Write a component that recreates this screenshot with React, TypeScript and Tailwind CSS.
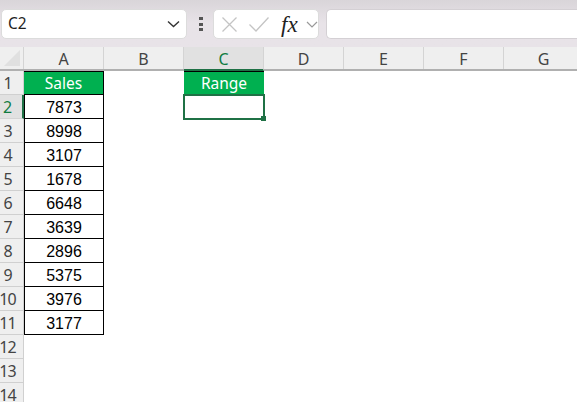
const cols = ["A", "B", "C", "D", "E", "F", "G"];
const data = [7873, 8998, 3107, 1678, 6648, 3639, 2896, 5375, 3976, 3177];
const rows = Array.from({ length: 14 }, (_, i) => i + 1);
const ui = "font-['Noto_Sans','Open_Sans',sans-serif]";

function Cell({ r, c }: { r: number; c: number }) {
  if (c === 0 && r === 1)
    return <div className={`h-6 w-20 shrink-0 bg-[#00b050] border-y border-black border-r flex items-center justify-center pt-px text-white text-[15.5px] ${ui}`}>Sales</div>;
  if (c === 0 && r <= 11)
    return <div className="h-6 w-20 shrink-0 bg-white border-b border-l border-r border-black flex items-center justify-center pt-[2px] text-black text-[16px] font-['Liberation_Sans',sans-serif]">{data[r - 2]}</div>;
  if (c === 2 && r === 1)
    return <div className={`h-6 w-20 shrink-0 bg-[#00b050] border-y border-black flex items-center justify-center pt-[2px] text-white text-[15.5px] ${ui}`}>Range</div>;
  return <div className="h-6 w-20 shrink-0 bg-white" />;
}

export default function App() {
  return (
    <div className="relative w-[577px] h-[402px] overflow-hidden bg-white">
      <div className="h-[47px] flex items-start bg-gradient-to-b from-[#d9d5d9] via-[#e8e3e8] to-[#e8e3e8] pt-[9px] pl-px">
        <div className={`w-[186px] h-[30px] shrink-0 bg-white rounded-[5px] border border-[#dcdcdc] flex items-center justify-between pl-[6px] pr-[6px] text-[15.5px] text-[#1f1f1f] ${ui}`}>
          <span>C2</span>
          <svg width="13" height="8" viewBox="0 0 13 8" fill="none" stroke="#333" strokeWidth="1.4"><path d="M1 1.5 6.5 6.5l5.5-5" /></svg>
        </div>
        <div className="w-[4px] h-[14px] ml-[12px] mt-[8px] shrink-0 flex flex-col justify-between">
          <div className="w-[4px] h-[3px] bg-[#555]" />
          <div className="w-[4px] h-[3px] bg-[#555]" />
          <div className="w-[4px] h-[3px] bg-[#555]" />
        </div>
        <div className="w-[106px] h-[30px] ml-[10px] bg-white rounded-[5px] border border-[#dcdcdc] flex items-center pl-[8px] shrink-0">
          <svg width="15" height="15" viewBox="0 0 15 15" fill="none" stroke="#c4c4c4" strokeWidth="1.3"><path d="M.5.5l14 14M14.5.5l-14 14" /></svg>
          <svg className="ml-[12px]" width="20" height="15" viewBox="0 0 20 15" fill="none" stroke="#c4c4c4" strokeWidth="1.3"><path d="M.5 7.5l6.5 6.5L19.5.5" /></svg>
          <span className="ml-[12px] w-[18px] text-[23px] leading-none italic text-[#222] font-['Liberation_Serif',serif]">fx</span>
          <svg className="ml-[7px]" width="12" height="7" viewBox="0 0 12 7" fill="none" stroke="#999" strokeWidth="1.2"><path d="M1 1l5 5 5-5" /></svg>
        </div>
        <div className="flex-1 h-[30px] ml-[7px] bg-white border border-[#d4d0d4] border-r-0 rounded-l-[5px]" />
      </div>

      <div className={`flex h-6 bg-[#efefef] border-b-2 border-[#b0b0b0] text-[16px] text-[#444] ${ui}`}>
        <div className="w-6 shrink-0 relative border-r border-[#d4d4d4]">
          <svg className="absolute left-[4px] top-[3px]" width="16" height="16" viewBox="0 0 16 16"><path d="M16 0v16H0z" fill="#e0e0e0" /></svg>
        </div>
        {cols.map((c) => (
          <div key={c} className={`w-20 shrink-0 flex items-center justify-center pt-px border-r border-[#d4d4d4] ${c === "C" ? "bg-[#e1e1e1] text-[#107c41] border-b-2 -mb-[2px] border-b-[#1f7145]" : ""}`}>{c}</div>
        ))}
      </div>

      <div className="flex flex-col">
        {rows.map((r) => (
          <div key={r} className="flex">
            <div className={`w-6 h-6 shrink-0 border-b border-r flex items-center justify-center pr-[8px] text-[16px] tracking-[-1px] ${ui} ${r === 2 ? "bg-[#e1e1e1] text-[#107c41] border-r-2 border-r-[#1f7145] border-b-[#d4d4d4]" : "bg-[#efefef] text-[#444] border-[#d0d0d0]"}`}>{r}</div>
            {[0, 1, 2, 3, 4, 5, 6].map((c) => <Cell key={c} r={r} c={c} />)}
          </div>
        ))}
      </div>

      <div className="absolute left-[183px] top-[94px] w-[82px] h-[26px] border-2 border-[#1f7145]">
        <div className="absolute -right-[3px] -bottom-[3px] w-[5px] h-[5px] bg-[#1f7145]" />
      </div>
    </div>
  );
}
